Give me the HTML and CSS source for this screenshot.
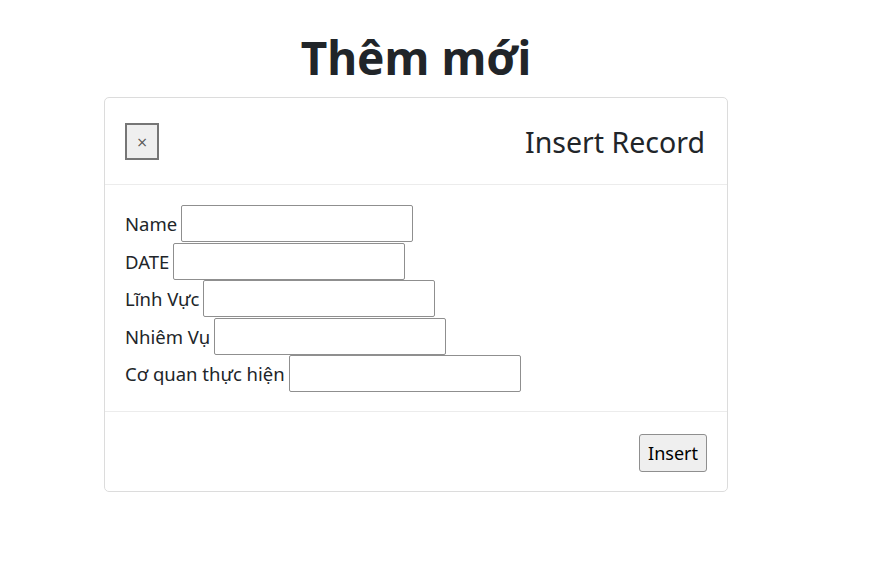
FILE: index.html
```html
<!DOCTYPE html>
<html lang="vi">
<head>
<meta charset="utf-8">
<title>Thêm mới</title>
<link rel="stylesheet" href="styles.css">
</head>
<body>
<div class="page">
  <h1 class="title">Thêm mới</h1>
  <div class="card">
    <div class="card-header">
      <button class="close" type="button">×</button>
      <h5 class="card-title">Insert Record</h5>
    </div>
    <div class="card-body">
      <div class="row"><label>Name</label><input type="text"></div>
      <div class="row"><label>DATE</label><input type="text"></div>
      <div class="row"><label>Lĩnh Vực</label><input type="text"></div>
      <div class="row"><label>Nhiêm Vụ</label><input type="text"></div>
      <div class="row"><label>Cơ quan thực hiện</label><input type="text"></div>
    </div>
    <div class="card-footer">
      <button class="btn" type="button">Insert</button>
    </div>
  </div>
</div>
</body>
</html>
```

FILE: styles.css
```css
* { box-sizing: border-box; }
html, body { margin: 0; padding: 0; background: #fff; }
body {
  font-family: "Noto Sans", "Open Sans", sans-serif;
  color: #212529;
}
.page {
  width: 624px;
  margin-left: 104px;
  padding-top: 28px;
}
.title {
  margin: 0 0 10px;
  text-align: center;
  font-size: 46px;
  font-weight: 700;
  line-height: 59px;
}
.card {
  border: 1px solid #dcdcdc;
  border-radius: 5px;
  height: 395px;
  display: flex;
  flex-direction: column;
}
.card-header {
  height: 87px;
  display: flex;
  align-items: center;
  justify-content: space-between;
  padding: 0 22px 0 20px;
  border-bottom: 1px solid #ececec;
}
.close {
  width: 34px;
  height: 37px;
  margin-top: 1px;
  border: 2px solid #767676;
  background: #efefef;
  color: #555;
  font-size: 14px;
  padding: 0;
  font-family: "DejaVu Sans", sans-serif;
}
.card-title {
  margin: 0 0 -2px;
  font-size: 28.5px;
  font-weight: 400;
  line-height: 1.2;
}
.card-body {
  height: 227px;
  padding: 20px 20px 0;
  border-bottom: 1px solid #ececec;
}
.row {
  display: flex;
  align-items: center;
  gap: 4px;
  height: 37.5px;
  font-size: 18.5px;
}
.row input {
  width: 232px;
  height: 37px;
  border: 1px solid #8f8f8f;
  border-radius: 2px;
  font-size: 18px;
}
.card-footer {
  flex: 1;
  display: flex;
  justify-content: flex-end;
  align-items: center;
  padding: 2px 20px 0;
}
.btn {
  width: 68px;
  height: 38px;
  border: 1px solid #8f8f8f;
  border-radius: 3px;
  background: #efefef;
  color: #000;
  font-family: "Noto Sans", sans-serif;
  font-size: 18px;
  padding: 0;
}
```
